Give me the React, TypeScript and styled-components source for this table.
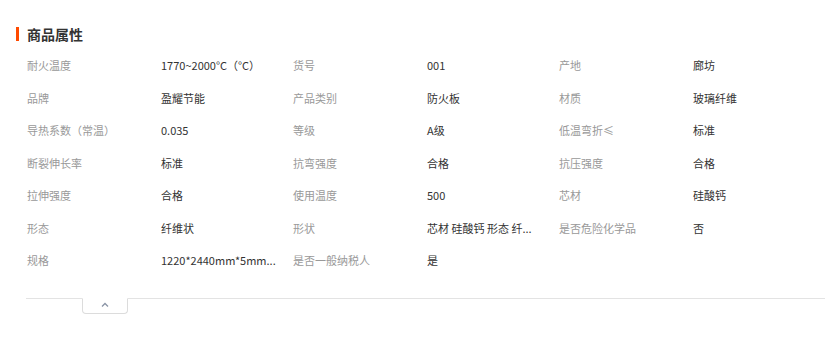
import React from "react";
import styled, { createGlobalStyle } from "styled-components";

const Global = createGlobalStyle`
  html, body { margin: 0; padding: 0; background: #fff; }
  body { font-family: "Noto Sans CJK SC", "Noto Sans", sans-serif; }
`;

const Section = styled.section`
  width: 837px;
  padding: 27px 12px 0 16px;
  box-sizing: border-box;
`;

const Title = styled.h2`
  margin: 0;
  height: 14px;
  line-height: 14px;
  border-left: 3px solid #ff4a00;
  padding-left: 8px;
  font-size: 14px;
  font-weight: 700;
  color: #333;
`;

const Grid = styled.div`
  margin: 8px 0 0 11px;
  display: grid;
  grid-template-columns: 134px 132px 134px 132px 134px 132px;
  grid-auto-rows: 32.5px;
  align-items: center;
  font-size: 11px;
`;

const Label = styled.div`
  color: #999;
  white-space: nowrap;
`;

const Value = styled.div`
  color: #333;
  white-space: nowrap;
`;

const Footer = styled.div`
  margin: 21px 0 0 10px;
  border-top: 1px solid #e3e3e3;
  height: 40px;
`;

const Toggle = styled.button`
  display: flex;
  align-items: flex-start;
  justify-content: center;
  margin: -1px 0 0 56px;
  width: 46px;
  height: 16px;
  padding: 3px 0 0;
  border: 1px solid #dcdcdc;
  border-top: 1px solid #fff;
  border-radius: 0 0 4px 4px;
  background: #fff;
  box-sizing: border-box;
  cursor: pointer;
`;

const items: [string, string][] = [
  ["耐火温度", "1770~2000°C（°C）"],
  ["货号", "001"],
  ["产地", "廊坊"],
  ["品牌", "盈耀节能"],
  ["产品类别", "防火板"],
  ["材质", "玻璃纤维"],
  ["导热系数（常温）", "0.035"],
  ["等级", "A级"],
  ["低温弯折≤", "标准"],
  ["断裂伸长率", "标准"],
  ["抗弯强度", "合格"],
  ["抗压强度", "合格"],
  ["拉伸强度", "合格"],
  ["使用温度", "500"],
  ["芯材", "硅酸钙"],
  ["形态", "纤维状"],
  ["形状", "芯材 硅酸钙 形态 纤..."],
  ["是否危险化学品", "否"],
  ["规格", "1220*2440mm*5mm..."],
  ["是否一般纳税人", "是"],
];

export default function App() {
  return (
    <>
      <Global />
      <Section>
        <Title>商品属性</Title>
        <Grid>
          {items.map(([k, v]) => (
            <React.Fragment key={k}>
              <Label>{k}</Label>
              <Value>{v}</Value>
            </React.Fragment>
          ))}
        </Grid>
        <Footer>
          <Toggle aria-label="收起">
            <svg width="8" height="5" viewBox="0 0 8 5">
              <path d="M1 4.5 L4 1.5 L7 4.5" fill="none" stroke="#8a94a6" strokeWidth="1.3" />
            </svg>
          </Toggle>
        </Footer>
      </Section>
    </>
  );
}
